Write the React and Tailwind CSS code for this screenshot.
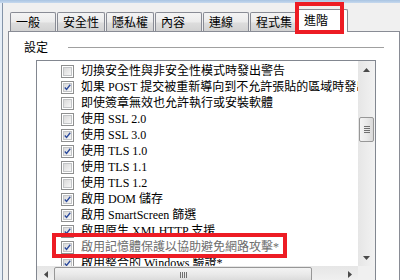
import React from 'react'

const tabs = [
    { label: '一般', w: 'w-[46px]' },
    { label: '安全性', w: 'w-[48px]' },
    { label: '隱私權', w: 'w-[48px]' },
    { label: '內容', w: 'w-[47px]' },
    { label: '連線', w: 'w-[46px]' },
    { label: '程式集', w: 'w-[47px]' },
]

const rows = [
    { text: '切換安全性與非安全性模式時發出警告', checked: false },
    { text: '如果 POST 提交被重新導向到不允許張貼的區域時發出警告', checked: true },
    { text: '即使簽章無效也允許執行或安裝軟體', checked: false },
    { text: '使用 SSL 2.0', checked: false },
    { text: '使用 SSL 3.0', checked: true },
    { text: '使用 TLS 1.0', checked: true },
    { text: '使用 TLS 1.1', checked: false },
    { text: '使用 TLS 1.2', checked: false },
    { text: '啟用 DOM 儲存', checked: true },
    { text: '啟用 SmartScreen 篩選', checked: true },
    { text: '啟用原生 XMLHTTP 支援', checked: true },
    { text: '啟用記憶體保護以協助避免網路攻擊*', checked: true, dim: true },
    { text: '啟用整合的 Windows 驗證*', checked: true },
]

const CheckBox = ({ checked }) => (
    <div className="w-[13px] h-[13px] shrink-0 border border-[#8e8f8f] bg-white p-px">
        <div className="w-full h-full border border-[#c2c4c6] bg-[linear-gradient(135deg,#d9d9d9,#f6f6f6)] flex items-center justify-center">
            {checked && (
                <svg width="9" height="9" viewBox="0 0 9 9">
                    <path d="M1 4.5 L3.3 7 L8 1" fill="none" stroke="#2b4a9c" strokeWidth="1.7" />
                </svg>
            )}
        </div>
    </div>
)

const Arrow = ({ dir }) => {
    const d = {
        up: 'M0 4 L3.5 0 L7 4 Z',
        down: 'M0 0 L7 0 L3.5 4 Z',
        left: 'M4 0 L4 7 L0 3.5 Z',
        right: 'M0 0 L4 3.5 L0 7 Z',
    }[dir]
    const vert = dir === 'up' || dir === 'down'
    return (
        <svg width={vert ? 7 : 4} height={vert ? 4 : 7} viewBox={vert ? '0 0 7 4' : '0 0 4 7'}>
            <path d={d} fill="#4a4a4a" />
        </svg>
    )
}

const App = () => {
    return (
        <div className="w-[400px] h-[280px] overflow-hidden bg-[#f0f0f0] relative font-['Noto_Sans_CJK_TC',sans-serif] text-[12px] text-black">
            <div className="h-[3px] bg-[linear-gradient(#a9c4e2,#c6d9ee)]" />
            <div className="flex h-[277px]">
                <div className="w-[2px] bg-[#e6eef7]" />
                <div className="w-px bg-[#8494a8]" />
                <div className="flex-1 pl-[5px] pt-[6px] flex flex-col min-w-0">
                    {/* tabs */}
                    <div className="flex items-end gap-px pl-[2px] h-[22px] relative z-10">
                        {tabs.map((t) => (
                            <div
                                key={t.label}
                                className={`${t.w} h-[19px] border border-b-0 border-[#898c95] rounded-t-[2px] bg-[linear-gradient(#f4f4f4,#ebebeb_50%,#dddddd_55%,#d2d2d2)] pl-[5px] flex items-center leading-none`}
                            >
                                {t.label}
                            </div>
                        ))}
                        <div className="w-[51px] h-[23px] -mb-px -ml-px border border-b-0 border-[#898c95] rounded-t-[2px] bg-white pl-[6px] pb-[2px] flex items-center leading-none">
                            進階
                        </div>
                    </div>

                    {/* panel */}
                    <div className="flex-1 border border-[#898c95] bg-white flex flex-col">
                        <div className="mt-[7px] h-[16px] flex items-center pl-[15px] pr-[15px]">
                            <span className="leading-none">設定</span>
                            <div className="flex-1 h-px bg-[#a0a0a0] ml-[20px]" />
                        </div>

                        <div className="mt-[5px] ml-[27px] w-[340px] h-[240px] border border-[#828790] bg-white flex flex-col">
                            <div className="flex h-[205px]">
                                <div className="flex-1 overflow-hidden pt-[2px] pl-[24px] font-['Liberation_Serif','Noto_Sans_CJK_TC',serif]">
                                    {rows.map((r) => (
                                        <div key={r.text} className="h-[16px] flex items-center whitespace-nowrap">
                                            <CheckBox checked={r.checked} />
                                            <span className={`ml-[7px] leading-none ${r.dim ? 'text-[#6d6d6d]' : 'text-black'}`}>
                                                {r.text}
                                            </span>
                                        </div>
                                    ))}
                                </div>
                                {/* vertical scrollbar */}
                                <div className="w-[17px] bg-[linear-gradient(90deg,#e6e6e6,#f2f2f2)] flex flex-col items-center">
                                    <div className="h-[17px] w-full flex items-center justify-center">
                                        <Arrow dir="up" />
                                    </div>
                                    <div className="mt-[39px] w-[15px] h-[25px] border border-[#979797] rounded-[2px] bg-[linear-gradient(90deg,#f3f3f3,#e9e9e9_50%,#d9d9d9)] flex flex-col items-center justify-center gap-px">
                                        <div className="w-[6px] h-px bg-[#6f6f6f]" />
                                        <div className="w-[6px] h-px bg-[#6f6f6f]" />
                                        <div className="w-[6px] h-px bg-[#6f6f6f]" />
                                        <div className="w-[6px] h-px bg-[#6f6f6f]" />
                                    </div>
                                    <div className="flex-1" />
                                    <div className="h-[17px] w-full flex items-center justify-center">
                                        <Arrow dir="down" />
                                    </div>
                                </div>
                            </div>
                            {/* horizontal scrollbar */}
                            <div className="flex h-[17px]">
                                <div className="flex-1 flex items-center bg-[linear-gradient(#e6e6e6,#f2f2f2)]">
                                    <div className="w-[17px] h-full flex items-center justify-center">
                                        <Arrow dir="left" />
                                    </div>
                                    <div className="w-[258px] h-[15px] border border-[#979797] rounded-[2px] bg-[linear-gradient(#f3f3f3,#e9e9e9_50%,#d9d9d9)] flex items-center justify-center gap-px">
                                        <div className="w-px h-[6px] bg-[#6f6f6f]" />
                                        <div className="w-px h-[6px] bg-[#6f6f6f]" />
                                        <div className="w-px h-[6px] bg-[#6f6f6f]" />
                                        <div className="w-px h-[6px] bg-[#6f6f6f]" />
                                    </div>
                                    <div className="flex-1" />
                                    <div className="w-[17px] h-full flex items-center justify-center">
                                        <Arrow dir="right" />
                                    </div>
                                </div>
                                <div className="w-[17px] bg-[#f0f0f0]" />
                            </div>
                        </div>
                    </div>
                </div>
            </div>

            {/* red highlight boxes */}
            <div className="absolute left-[295px] top-[2px] w-[49px] h-[32px] border-4 border-[#ed1c24] z-20" />
            <div className="absolute left-[52px] top-[233px] w-[235px] h-[25px] border-4 border-[#ed1c24] z-20" />
        </div>
    )
}

export default App
